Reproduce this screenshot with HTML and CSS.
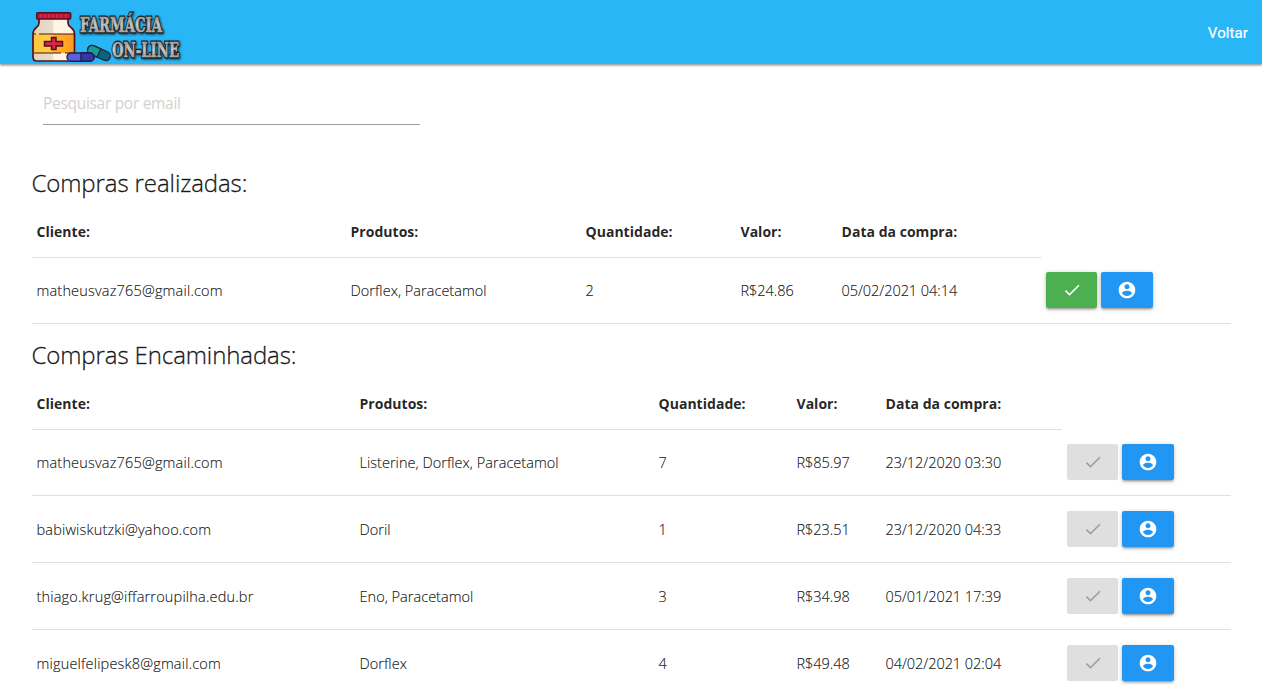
FILE: index.html
```html
<!DOCTYPE html>
<html lang="pt-BR">
<head>
<meta charset="utf-8">
<title>Farmácia On-line</title>
<link rel="stylesheet" href="styles.css">
</head>
<body>
<svg class="sprite" width="0" height="0">
  <symbol id="check" viewBox="0 0 24 24"><path d="M9 16.17L4.83 12l-1.42 1.41L9 19 21 7l-1.41-1.41z"/></symbol>
  <symbol id="account" viewBox="0 0 24 24"><path d="M12 2C6.48 2 2 6.48 2 12s4.48 10 10 10 10-4.48 10-10S17.52 2 12 2zm0 3c1.66 0 3 1.34 3 3s-1.34 3-3 3-3-1.34-3-3 1.34-3 3-3zm0 14.2c-2.5 0-4.71-1.28-6-3.22.03-1.99 4-3.08 6-3.08 1.99 0 5.97 1.09 6 3.08-1.29 1.94-3.5 3.22-6 3.22z"/></symbol>
</svg>
<nav class="navbar">
  <svg class="logo" width="152" height="54" viewBox="31 10 152 54">
    <defs>
      <linearGradient id="steel" x1="0" y1="0" x2="0" y2="1"><stop offset="0" stop-color="#777"/><stop offset=".5" stop-color="#ccc"/><stop offset="1" stop-color="#888"/></linearGradient>
      <linearGradient id="glass"><stop offset="0" stop-color="#e2d3c1"/><stop offset=".48" stop-color="#e8dccb"/><stop offset=".5" stop-color="#fff5e7"/><stop offset="1" stop-color="#fff5e7"/></linearGradient>
      <linearGradient id="label"><stop offset="0" stop-color="#ffc63c"/><stop offset=".45" stop-color="#ffd04a"/><stop offset=".5" stop-color="#ffb52c"/><stop offset="1" stop-color="#ff9b22"/></linearGradient>
    </defs>
    <path d="M39 19H68V23C68 28 74.5 27 74.5 34V57Q74.5 61 70 61H37Q33 61 33 57V34C33 27 39 28 39 23Z" fill="url(#glass)"/>
    <path d="M33 34H74V53H33Z" fill="url(#label)"/>
    <path d="M34 34H36M39 34H74M34 53H61M65 53H74" stroke="#53111a" stroke-width="1.2"/>
    <path d="M39 19V23C39 28 33 27 33 34V57Q33 61 37 61H70Q74.5 61 74.5 57V34C74.5 27 68 28 68 23V19" fill="none" stroke="#53111a" stroke-width="1.7"/>
    <rect x="36.7" y="12.8" width="34" height="6.2" rx="1" fill="#b5173e" stroke="#53111a" stroke-width="1.5"/>
    <path d="M41 14V18M45 14V18M49 14V18M53 14V18M57 14V18M61 14V18M66 14V18" stroke="#e32a55" stroke-width="1.4"/>
    <path d="M51.5 37.5H56V41.5H62.5V46H56V49.5H51.5V46H44.5V41.5H51.5Z" fill="#db2547" stroke="#53111a" stroke-width="1.5"/>
    <g transform="rotate(24 99 53)" stroke="#242c40" stroke-width="1.4">
      <rect x="87" y="48.5" width="24" height="9" rx="4.5" fill="#086582"/>
      <path d="M99 48.5H91.5a4.5 4.5 0 0 0 0 9H99Z" fill="#159c99"/>
    </g>
    <rect x="67" y="53" width="27" height="8.3" rx="4.1" fill="#5b61db" stroke="#29194a" stroke-width="1.4"/>
    <path d="M81 53H90a4.1 4.1 0 0 1 0 8.3H81Z" fill="#3438a3" stroke="#29194a" stroke-width="1.4"/>
    <g class="logo-outline">
      <g id="wordmark">
        <text x="80" y="32" textLength="82" lengthAdjust="spacingAndGlyphs">FARMÁCIA</text>
        <text x="112" y="57" textLength="67" lengthAdjust="spacingAndGlyphs">ON-LINE</text>
      </g>
    </g>
    <use class="logo-face" href="#wordmark"/>
  </svg>
  <a class="back">Voltar</a>
</nav>
<main class="content">
  <input class="search" type="text" placeholder="Pesquisar por email">
  <h5 class="title">Compras realizadas:</h5>
  <table class="orders">
    <colgroup><col class="a1"><col class="a2"><col class="a3"><col class="a4"><col class="a5"><col></colgroup>
    <thead><tr><th>Cliente:</th><th>Produtos:</th><th>Quantidade:</th><th>Valor:</th><th>Data da compra:</th></tr></thead>
    <tbody>
      <tr><td class="email">matheusvaz765@gmail.com</td><td>Dorflex, Paracetamol</td><td>2</td><td class="num">R$24.86</td><td class="num">05/02/2021 04:14</td><td><div class="actions"><button class="btn green"><svg class="icon"><use href="#check"/></svg></button><button class="btn blue"><svg class="icon"><use href="#account"/></svg></button></div></td></tr>
    </tbody>
  </table>
  <h5 class="title second">Compras Encaminhadas:</h5>
  <table class="orders">
    <colgroup><col class="b1"><col class="b2"><col class="b3"><col class="b4"><col class="b5"><col></colgroup>
    <thead><tr><th>Cliente:</th><th>Produtos:</th><th>Quantidade:</th><th>Valor:</th><th>Data da compra:</th></tr></thead>
    <tbody>
      <tr><td class="email">matheusvaz765@gmail.com</td><td>Listerine, Dorflex, Paracetamol</td><td>7</td><td class="num">R$85.97</td><td class="num">23/12/2020 03:30</td><td><div class="actions"><button class="btn off"><svg class="icon"><use href="#check"/></svg></button><button class="btn blue"><svg class="icon"><use href="#account"/></svg></button></div></td></tr>
      <tr><td class="email">babiwiskutzki@yahoo.com</td><td>Doril</td><td>1</td><td class="num">R$23.51</td><td class="num">23/12/2020 04:33</td><td><div class="actions"><button class="btn off"><svg class="icon"><use href="#check"/></svg></button><button class="btn blue"><svg class="icon"><use href="#account"/></svg></button></div></td></tr>
      <tr><td class="email">thiago.krug@iffarroupilha.edu.br</td><td>Eno, Paracetamol</td><td>3</td><td class="num">R$34.98</td><td class="num">05/01/2021 17:39</td><td><div class="actions"><button class="btn off"><svg class="icon"><use href="#check"/></svg></button><button class="btn blue"><svg class="icon"><use href="#account"/></svg></button></div></td></tr>
      <tr><td class="email">miguelfelipesk8@gmail.com</td><td>Dorflex</td><td>4</td><td class="num">R$49.48</td><td class="num">04/02/2021 02:04</td><td><div class="actions"><button class="btn off"><svg class="icon"><use href="#check"/></svg></button><button class="btn blue"><svg class="icon"><use href="#account"/></svg></button></div></td></tr>
    </tbody>
  </table>
</main>
</body>
</html>
```
FILE: styles.css
```css
* { box-sizing: border-box; }
html, body { height: 100%; }
body { margin: 0; overflow: hidden; background: #fff; color: rgba(0,0,0,.87); font-family: "Open Sans", "Noto Sans", sans-serif; font-size: 14.5px; font-weight: 300; }
.sprite { display: block; }
.navbar { display: flex; align-items: flex-start; justify-content: space-between; height: 64px; padding: 10px 14px 0 31px; background: #29b6f6; box-shadow: 0 2px 2px rgba(0,0,0,.18), 0 1px 2px rgba(0,0,0,.3); }
.logo { display: block; overflow: visible; }
.logo-outline, .logo-face { font: bold 21px "DejaVu Serif", serif; }
.logo-outline { fill: #1c1c1c; stroke: #1c1c1c; stroke-width: 3px; filter: drop-shadow(1.5px 1.5px 1px rgba(0,0,0,.7)); }
.logo-face { fill: url(#steel); stroke: #aaa; stroke-width: .7px; }
.back { margin-top: 13px; color: #fff; font: 400 15px/20px Roboto, sans-serif; letter-spacing: .1px; -webkit-text-stroke: .2px; }
.content { padding: 16px 31px 0 32px; }
.search { display: block; width: 377px; height: 45px; margin-left: 11px; padding: 1px 0 0; border: 0; border-bottom: 1px solid #9e9e9e; background: transparent; font: 400 15.5px "Open Sans", sans-serif; letter-spacing: -.3px; outline: 0; }
.search::placeholder { color: #d1d1d1; opacity: 1; }
.title { height: 37px; margin: 44px 0 0 -.5px; font-size: 24px; line-height: 27px; font-weight: 300; letter-spacing: -.1px; -webkit-text-stroke: .35px; }
.title.second { margin-top: 17px; }
.orders { width: 1199px; table-layout: fixed; border-collapse: separate; border-spacing: 0; }
.orders th, .orders td { padding: 0 5px 0 4.5px; border-bottom: 1px solid rgba(0,0,0,.12); text-align: left; white-space: nowrap; }
.orders th { height: 52px; font-size: 14px; font-weight: 700; letter-spacing: .03px; }
.orders td { height: 67px; letter-spacing: .03px; -webkit-text-stroke: .2px; }
.orders .email { letter-spacing: .18px; }
.orders .num { letter-spacing: -.05px; }
.orders td:last-child { padding-left: 5px; }
.orders tbody tr:first-child td { height: 66px; }
.orders tbody tr:first-child td:last-child { padding-bottom: 1px; }
.a1 { width: 314px; }
.a2 { width: 235px; }
.a3 { width: 155px; }
.a4 { width: 101px; }
.a5 { width: 204px; }
.b1 { width: 323px; }
.b2 { width: 299px; }
.b3 { width: 138px; }
.b4 { width: 89px; }
.b5 { width: 181px; }
.actions { display: flex; gap: 4px; }
.btn { display: flex; align-items: center; justify-content: center; width: 52px; height: 36px; padding: 0; border: 0; border-radius: 2px; color: #fff; box-shadow: 0 2px 2px rgba(0,0,0,.14), 0 3px 1px -2px rgba(0,0,0,.12), 0 1px 5px rgba(0,0,0,.2); }
.btn:first-child { width: 51px; }
.green { background: #4caf50; }
.blue { background: #2196f3; }
.off { background: #dfdfdf; color: #9f9f9f; box-shadow: none; }
.icon { width: 20px; height: 20px; fill: currentColor; }
```
